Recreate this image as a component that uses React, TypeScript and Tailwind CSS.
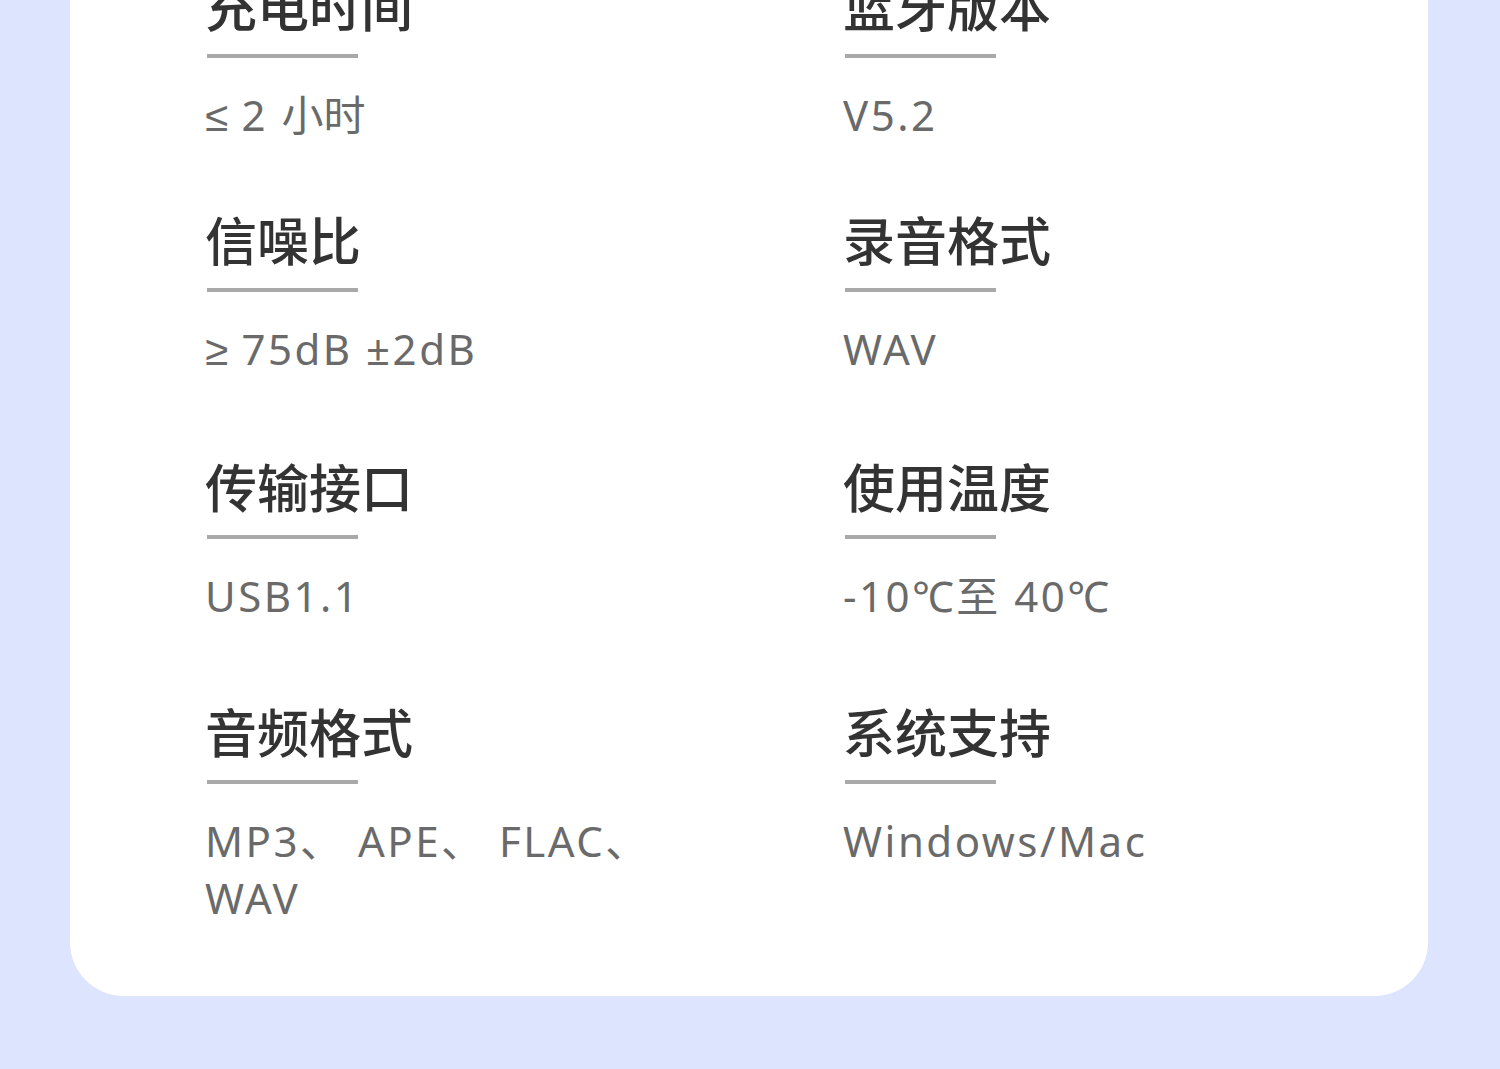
const Cmp = ({ c }: { c: string }) => (
  <span className="tracking-normal" style={{ fontFamily: '"Liberation Sans", sans-serif' }}>
    {c}
  </span>
)

const rows: { mt: string; items: { title: string; value: React.ReactNode }[] }[] = [
  {
    mt: 'mt-0',
    items: [
      {
        title: '充电时间',
        value: (
          <>
            <Cmp c="≤" /> 2 <span className="tracking-normal">小时</span>
          </>
        ),
      },
      { title: '蓝牙版本', value: 'V5.2' },
    ],
  },
  {
    mt: 'mt-[66px]',
    items: [
      {
        title: '信噪比',
        value: (
          <>
            <Cmp c="≥" /> 75dB ±2dB
          </>
        ),
      },
      { title: '录音格式', value: 'WAV' },
    ],
  },
  {
    mt: 'mt-[79px]',
    items: [
      { title: '传输接口', value: 'USB1.1' },
      { title: '使用温度', value: '-10℃至 40℃' },
    ],
  },
  {
    mt: 'mt-[79px]',
    items: [
      {
        title: '音频格式',
        value: (
          <>
            MP3、 APE、 FLAC、
            <br />
            WAV
          </>
        ),
      },
      { title: '系统支持', value: 'Windows/Mac' },
    ],
  },
]

function Spec({ title, value }: { title: string; value: React.ReactNode }) {
  return (
    <div className="flex flex-col">
      <div className="text-[52px] leading-[60px] font-medium text-[#333333] whitespace-nowrap">{title}</div>
      <div className="mt-[17px] ml-[2px] w-[151px] h-[4px] bg-[#a9a9a9]" />
      <div className="mt-[28px] text-[42px] leading-[57px] tracking-[2.5px] text-[#6a6a6a] whitespace-nowrap">
        {value}
      </div>
    </div>
  )
}

export default function App() {
  return (
    <div
      className="w-[1500px] h-[1069px] bg-[#dce5fd] pl-[70px] pr-[72px] pb-[73px] overflow-hidden"
      style={{ fontFamily: '"Noto Sans", "Noto Sans CJK SC", sans-serif' }}
    >
      <div className="h-full bg-white rounded-b-[54px] overflow-hidden pl-[135px]">
        <div className="-mt-[23px] flex flex-col">
          {rows.map((row, i) => (
            <div key={i} className={`${row.mt} grid grid-cols-[638px_1fr]`}>
              {row.items.map((it) => (
                <Spec key={it.title} title={it.title} value={it.value} />
              ))}
            </div>
          ))}
        </div>
      </div>
    </div>
  )
}
